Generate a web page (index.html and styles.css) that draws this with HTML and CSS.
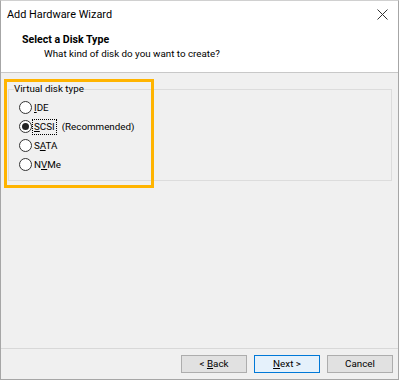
FILE: index.html
```html
<!DOCTYPE html>
<html>
<head>
<meta charset="utf-8">
<link rel="stylesheet" href="styles.css">
</head>
<body>
<div class="window">
  <div class="titlebar">
    <span class="title">Add Hardware Wizard</span>
    <svg class="close" width="11" height="11" viewBox="0 0 11 11"><path d="M0.5 0.5 L10.5 10.5 M10.5 0.5 L0.5 10.5" stroke="#333" stroke-width="1" fill="none"/></svg>
  </div>
  <div class="header">
    <div class="h-title">Select a Disk Type</div>
    <div class="h-sub">What kind of disk do you want to create?</div>
  </div>
  <div class="content">
    <fieldset class="group">
      <legend>Virtual disk type</legend>
      <div class="opt"><span class="radio"></span><span class="lbl"><u>I</u>DE</span></div>
      <div class="opt"><span class="radio checked"></span><span class="lbl focus"><u>S</u>CSI</span><span class="rec">(Recommended)</span></div>
      <div class="opt"><span class="radio"></span><span class="lbl">S<u>A</u>TA</span></div>
      <div class="opt"><span class="radio"></span><span class="lbl">N<u>V</u>Me</span></div>
    </fieldset>
    <div class="highlight"></div>
  </div>
  <div class="footer">
    <button class="btn">&lt; <u>B</u>ack</button>
    <button class="btn primary"><u>N</u>ext &gt;</button>
    <button class="btn">Cancel</button>
  </div>
</div>
</body>
</html>
```
FILE: styles.css
```css
* { box-sizing: border-box; }
html, body { margin: 0; padding: 0; }
body {
  font-family: "Roboto", "Noto Sans", sans-serif;
  font-size: 9.8px;
  color: #000;
  background: #fff;
}
.window {
  width: 399px;
  height: 380px;
  border: 1px solid #a6a6a6;
  border-top-color: #d0d0d0;
  display: flex;
  flex-direction: column;
  background: #f0f0f0;
}
.titlebar {
  height: 29px;
  background: #fff;
  display: flex;
  align-items: center;
  justify-content: space-between;
  padding: 0 10px 2px 6px;
}
.title { font-size: 10.9px; color: #000; }
.close { display: block; }
.header {
  height: 43px;
  background: #fff;
  border-bottom: 1px solid #c8c8c8;
  padding: 3px 0 0 21px;
  line-height: 14px;
}
.h-title { font-weight: bold; font-size: 10.6px; }
.h-sub { padding-left: 22px; }
.content {
  flex: 1;
  position: relative;
  padding: 9px 6px 0 7px;
}
.group {
  margin: 0;
  height: 99px;
  border: 1px solid #dcdcdc;
  padding: 2px 0 0 5px;
}
.group legend {
  padding: 0;
  margin-left: 0;
  line-height: 14px;
}
.opt {
  display: flex;
  align-items: center;
  height: 19px;
  padding-left: 5px;
}
.radio {
  width: 13px;
  height: 13px;
  border: 1px solid #333;
  border-radius: 50%;
  background: #fff;
  margin-right: 1px;
  display: flex;
  align-items: center;
  justify-content: center;
}
.radio.checked::after {
  content: "";
  width: 7px;
  height: 7px;
  border-radius: 50%;
  background: #222;
}
.lbl { padding: 0 1px; line-height: 14px; }
.lbl.focus { outline: 1px dotted #000; }
.rec { margin-left: 6px; }
.highlight {
  position: absolute;
  left: 3px;
  top: 6px;
  width: 150px;
  height: 109px;
  border: 3px solid #ffb400;
  pointer-events: none;
}
.footer {
  height: 31px;
  border-top: 1px solid #d8d8d8;
  display: flex;
  justify-content: flex-end;
  align-items: flex-start;
  gap: 7px;
  padding: 6px 5px 0 0;
}
.btn {
  width: 66px;
  height: 18px;
  border: 1px solid #adadad;
  background: #e1e1e1;
  font-family: inherit;
  font-size: 9.8px;
  padding: 0;
  line-height: 14px;
  color: #000;
}
.btn.primary {
  border-color: #0078d7;
  background: #e5f1fb;
}
```
